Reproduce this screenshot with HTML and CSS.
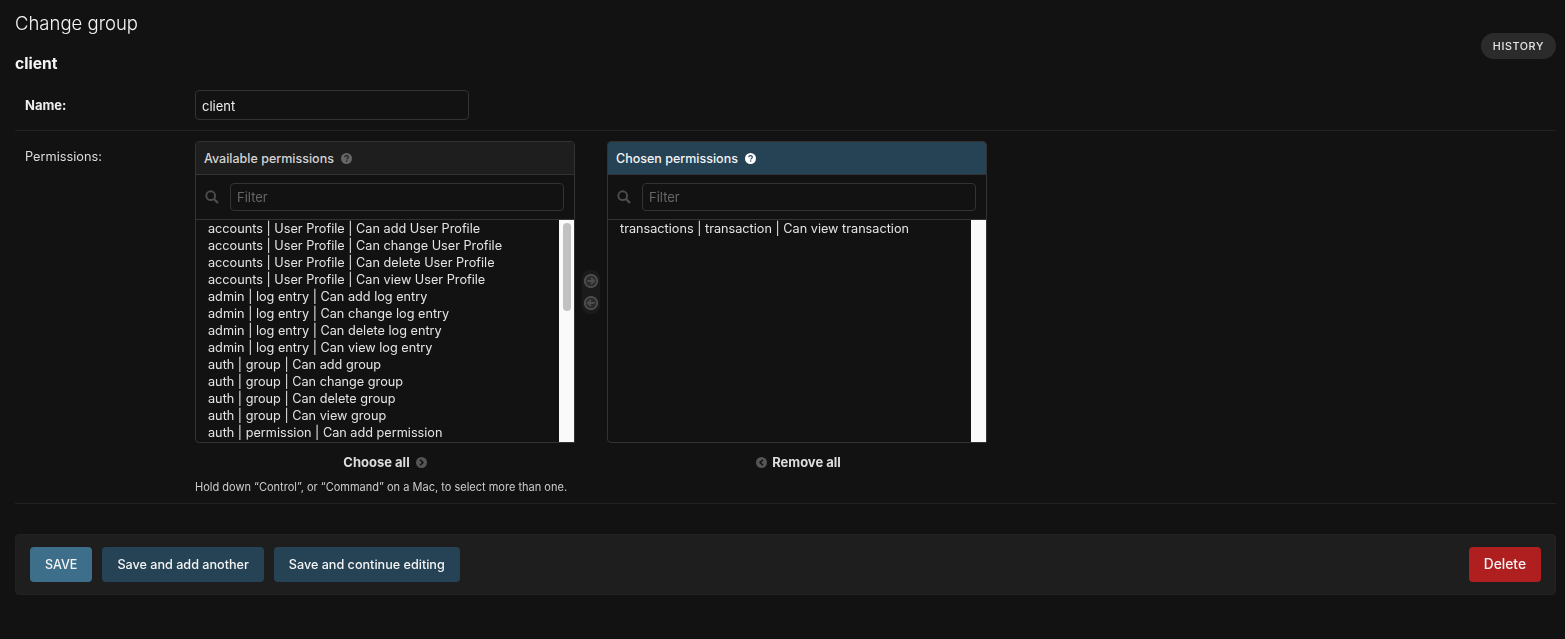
FILE: index.html
```html
<!DOCTYPE html>
<html lang="en">
  <head>
    <meta charset="UTF-8" />
    <title>Change group</title>
    <link rel="stylesheet" href="styles.css">
  </head>
  <body>
    <div class="content">
      <div class="title-row">
        <div>
          <h1>Change group</h1>
          <h2>client</h2>
        </div>
        <a class="history" href="#">HISTORY</a>
      </div>

      <div class="form-row name-row">
        <label class="required">Name:</label>
        <input class="name-input" type="text" value="client">
      </div>

      <div class="form-row perms-row">
        <label>Permissions:</label>
        <div class="perms-field">
          <div class="selector">
            <div class="selector-col">
              <div class="box">
                <div class="box-title">
                  Available permissions
                  <svg class="help" viewBox="0 0 16 16"><circle cx="8" cy="8" r="8" fill="currentColor"/><path d="M5.4 6.2C5.5 4.6 6.6 3.7 8.1 3.7c1.5 0 2.6.9 2.6 2.2 0 1-.6 1.5-1.3 2-.6.4-.9.7-.9 1.4" fill="none" stroke="var(--help-ink)" stroke-width="1.7"/><circle cx="8.3" cy="11.8" r="1.1" fill="var(--help-ink)"/></svg>
                </div>
                <div class="filter">
                  <svg class="search" viewBox="0 0 16 16"><circle cx="6.5" cy="6.5" r="5" fill="none" stroke="currentColor" stroke-width="2.2"/><path d="M10.2 10.2l4.6 4.6" stroke="currentColor" stroke-width="2.6"/></svg>
                  <input type="text" placeholder="Filter">
                </div>
                <div class="list-wrap">
                  <ul class="options">
                    <li>accounts | User Profile | Can add User Profile</li>
                    <li>accounts | User Profile | Can change User Profile</li>
                    <li>accounts | User Profile | Can delete User Profile</li>
                    <li>accounts | User Profile | Can view User Profile</li>
                    <li>admin | log entry | Can add log entry</li>
                    <li>admin | log entry | Can change log entry</li>
                    <li>admin | log entry | Can delete log entry</li>
                    <li>admin | log entry | Can view log entry</li>
                    <li>auth | group | Can add group</li>
                    <li>auth | group | Can change group</li>
                    <li>auth | group | Can delete group</li>
                    <li>auth | group | Can view group</li>
                    <li>auth | permission | Can add permission</li>
                  </ul>
                  <div class="scrolltrack"><div class="scrollthumb"></div></div>
                </div>
              </div>
              <a class="all-link" href="#">Choose all
                <svg class="all-icon" viewBox="0 0 16 16"><circle cx="8" cy="8" r="8" fill="#555"/><path d="M6 4l4 4-4 4" fill="none" stroke="#121212" stroke-width="2.4"/></svg>
              </a>
            </div>

            <div class="arrows">
              <svg viewBox="0 0 16 16"><circle cx="8" cy="8" r="7" fill="#2b2b2b" stroke="#4d4d4d" stroke-width="2.2"/><path d="M3.8 8h7.4M8 4.4L11.6 8 8 11.6" fill="none" stroke="#4d4d4d" stroke-width="2.2"/></svg>
              <svg viewBox="0 0 16 16"><circle cx="8" cy="8" r="7" fill="#2b2b2b" stroke="#4d4d4d" stroke-width="2.2"/><path d="M12.2 8H4.8M8 4.4L4.4 8 8 11.6" fill="none" stroke="#4d4d4d" stroke-width="2.2"/></svg>
            </div>

            <div class="selector-col">
              <div class="box">
                <div class="box-title chosen">
                  Chosen permissions
                  <svg class="help" viewBox="0 0 16 16"><circle cx="8" cy="8" r="8" fill="currentColor"/><path d="M5.4 6.2C5.5 4.6 6.6 3.7 8.1 3.7c1.5 0 2.6.9 2.6 2.2 0 1-.6 1.5-1.3 2-.6.4-.9.7-.9 1.4" fill="none" stroke="var(--help-ink)" stroke-width="1.7"/><circle cx="8.3" cy="11.8" r="1.1" fill="var(--help-ink)"/></svg>
                </div>
                <div class="filter">
                  <svg class="search" viewBox="0 0 16 16"><circle cx="6.5" cy="6.5" r="5" fill="none" stroke="currentColor" stroke-width="2.2"/><path d="M10.2 10.2l4.6 4.6" stroke="currentColor" stroke-width="2.6"/></svg>
                  <input type="text" placeholder="Filter">
                </div>
                <div class="list-wrap">
                  <ul class="options">
                    <li>transactions | transaction | Can view transaction</li>
                  </ul>
                  <div class="scrolltrack"></div>
                </div>
              </div>
              <a class="all-link all-link-remove" href="#">
                <svg class="all-icon" viewBox="0 0 16 16"><circle cx="8" cy="8" r="8" fill="#555"/><path d="M10 4L6 8l4 4" fill="none" stroke="#121212" stroke-width="2.4"/></svg>
                Remove all</a>
            </div>
          </div>
          <div class="help-text">Hold down “Control”, or “Command” on a Mac, to select more than one.</div>
        </div>
      </div>

      <div class="submit-row">
        <button class="btn btn-default">SAVE</button>
        <button class="btn">Save and add another</button>
        <button class="btn">Save and continue editing</button>
        <a class="btn btn-delete" href="#">Delete</a>
      </div>
    </div>
  </body>
</html>
```

FILE: styles.css
```css
body {
  margin: 0;
  background: #121212;
  color: #eeeeee;
  font-family: Inter, "Liberation Sans", sans-serif;
  font-size: 13px;
}

.content {
  padding: 0 9px 0 15px;
  will-change: opacity;
}

.title-row {
  display: flex;
  justify-content: space-between;
  align-items: flex-start;
}

h1 {
  margin: 0;
  padding-top: 11px;
  font-size: 18.5px;
  line-height: 24px;
  font-weight: 300;
  color: #f5f5f5;
}

h2 {
  margin: 0;
  padding-top: 17px;
  font-size: 15.7px;
  line-height: 24px;
  font-weight: 700;
  color: #f5f5f5;
}

.history {
  margin-top: 33px;
  height: 26px;
  line-height: 27px;
  padding: 0 12px;
  border-radius: 13px;
  background: #2b2b2b;
  color: #e6e6e6;
  font-size: 10.75px;
  font-weight: 500;
  letter-spacing: 0.6px;
  text-decoration: none;
}

.form-row {
  display: flex;
  padding: 0 10px;
  border-bottom: 1px solid #222222;
}

.form-row label {
  width: 170px;
  color: #dddddd;
  font-size: 12.75px;
}

.form-row label.required {
  font-size: 13px;
  font-weight: 700;
  color: #eeeeee;
}

.name-row {
  align-items: center;
  margin-top: 14px;
  padding-bottom: 10px;
}

.name-input {
  box-sizing: border-box;
  width: 274px;
  height: 30px;
  padding: 1px 6px 0;
  background: #121212;
  border: 1px solid #333333;
  border-radius: 4px;
  color: #eeeeee;
  font: 13px Inter, "Liberation Sans", sans-serif;
}

.perms-row {
  padding-top: 10px;
  padding-bottom: 8px;
}

.perms-row label {
  padding-top: 8px;
}

.selector {
  display: flex;
  align-items: flex-start;
}

.selector-col {
  width: 380px;
}

.box {
  box-sizing: border-box;
  height: 302px;
  display: flex;
  flex-direction: column;
  border: 1px solid #333333;
  border-radius: 4px 4px 0 4px;
  overflow: hidden;
}

.box-title {
  --help-ink: #1e1e1e;
  box-sizing: border-box;
  flex: none;
  height: 33px;
  display: flex;
  align-items: center;
  gap: 7px;
  padding: 0 8px;
  background: #1e1e1e;
  border-bottom: 1px solid #333333;
  color: #d4d4d4;
  font-size: 12.5px;
  font-weight: 500;
}

.box-title .help {
  color: #666666;
}

.box-title.chosen {
  --help-ink: #264356;
  background: #264356;
  color: #f4f4f4;
}

.box-title.chosen .help {
  color: #ffffff;
}

.help {
  width: 11px;
  height: 11px;
}

.filter {
  box-sizing: border-box;
  flex: none;
  height: 45px;
  display: flex;
  align-items: center;
  gap: 11px;
  padding: 0 10px 0 9px;
  border-bottom: 1px solid #333333;
}

.search {
  flex: none;
  width: 14px;
  height: 14px;
  color: #4d4d4d;
}

.filter input {
  flex: 1;
  min-width: 0;
  box-sizing: border-box;
  height: 28px;
  padding: 0 6px;
  background: #121212;
  border: 1px solid #333333;
  border-radius: 4px;
  color: #eeeeee;
  font: 13px Inter, "Liberation Sans", sans-serif;
}

.filter input::placeholder {
  color: #666666;
}

.list-wrap {
  flex: 1;
  min-height: 0;
  display: flex;
}

.options {
  flex: 1;
  margin: 0;
  padding: 0 12px;
  list-style: none;
  overflow: hidden;
}

.options li {
  height: 17px;
  line-height: 17px;
  color: #e4e4e4;
  font-size: 12.7px;
  white-space: nowrap;
}

.scrolltrack {
  flex: none;
  width: 15px;
  background: #fafafa;
  box-sizing: border-box;
  padding: 3px 3px 0 4px;
}

.scrollthumb {
  height: 88px;
  background: #c1c1c1;
  border-radius: 4px;
}

.arrows {
  box-sizing: border-box;
  width: 18px;
  height: 44px;
  margin: 129px 7px 0;
  padding: 4px 2px 0;
  display: flex;
  flex-direction: column;
  gap: 8px;
  background: #1b1b1b;
  border-radius: 8px;
}

.arrows svg {
  width: 14px;
  height: 14px;
  flex: none;
}

.all-link {
  display: flex;
  justify-content: center;
  align-items: center;
  gap: 6px;
  margin-top: 11px;
  height: 16px;
  color: #dddddd;
  font-size: 13px;
  font-weight: 700;
  text-decoration: none;
}

.all-link-remove {
  gap: 5px;
  padding-left: 3px;
}

.all-icon {
  width: 11px;
  height: 11px;
}

.help-text {
  margin-top: 9px;
  height: 16px;
  line-height: 16px;
  color: #cccccc;
  font-size: 11.02px;
}

.submit-row {
  display: flex;
  gap: 10px;
  margin-top: 30px;
  padding: 12px 14px;
  background: #1e1e1e;
  border: 1px solid #222222;
  border-radius: 4px;
}

.btn {
  box-sizing: border-box;
  height: 35px;
  padding: 0 15px;
  border: none;
  border-radius: 4px;
  background: #264356;
  color: #f4f4f4;
  font: 500 12.62px/35px Inter, "Liberation Sans", sans-serif;
  text-decoration: none;
}

.btn-default {
  background: #3d6f8a;
  font-size: 12.5px;
}

.btn-delete {
  margin-left: auto;
  background: #b01f1f;
  font-size: 13.8px;
}
```
